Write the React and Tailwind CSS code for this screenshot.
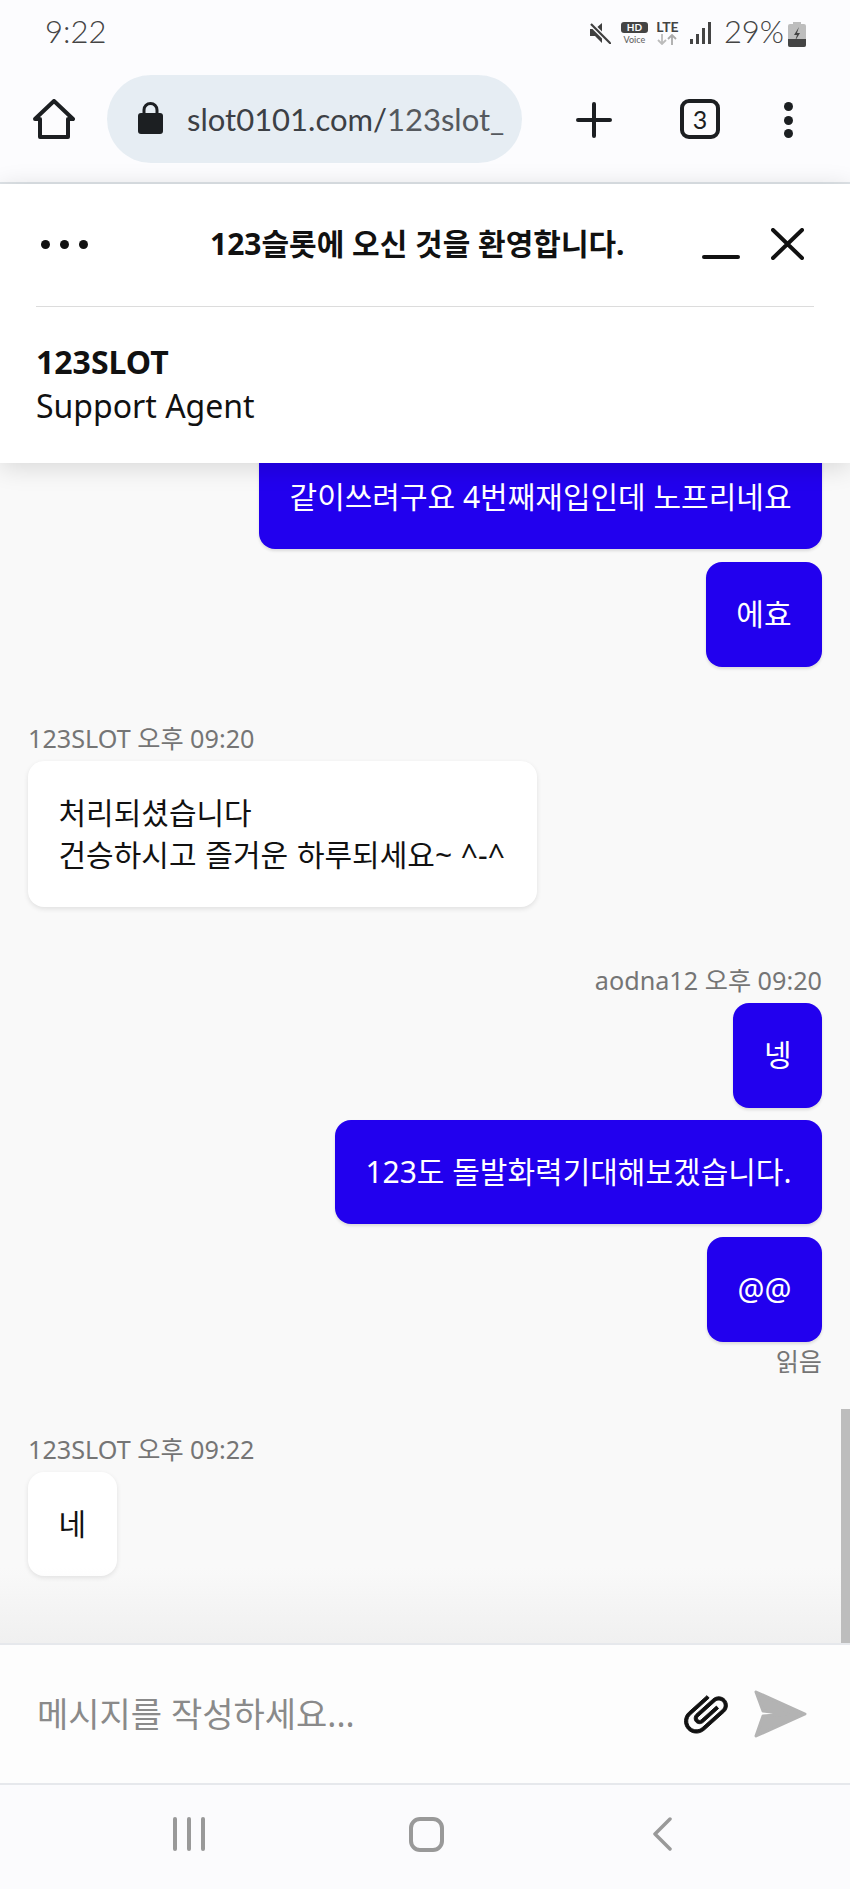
const cjk = "font-['Noto_Sans','Noto_Sans_CJK_KR',sans-serif]";

function Me({ children, className = "" }) {
  return (
    <div className={"self-end rounded-[16px] bg-[#2200ee] px-[30.5px] py-[31.25px] text-[30px] leading-[42px] text-white shadow-[0_2px_3px_rgba(0,0,0,0.12)] " + className}>
      {children}
    </div>
  );
}
function Them({ children, className = "" }) {
  return (
    <div className={"self-start rounded-[16px] bg-white px-[30.5px] py-[31.25px] text-[30px] leading-[42px] text-[#111] shadow-[0_2px_5px_rgba(0,0,0,0.1)] " + className}>
      {children}
    </div>
  );
}
function Meta({ children, className = "" }) {
  return <div className={"h-[36px] text-[25.2px] leading-[36px] text-[#757575] " + className}>{children}</div>;
}

export default function App() {
  return (
    <div className={"flex h-[1889px] w-[850px] flex-col overflow-hidden bg-[#fcfcfe] " + cjk}>
      {/* status bar */}
      <div className="flex h-[66px] shrink-0 items-start justify-between pl-[45px] pr-[44px] pt-[12px] font-['Lato','Noto_Sans',sans-serif] text-[#444]">
        <div className="text-[31px] font-light leading-[38px]">9:22</div>
        <div className="flex items-start">
          <svg width="22" height="22" viewBox="0 0 22 22" className="mt-[10px]">
            <path d="M1 7h5l7-6v20l-7-7H1z" fill="#3f3f3f" />
            <path d="M1 1l21 21" stroke="#fcfcfe" strokeWidth="5" />
            <path d="M2 2l20 20" stroke="#3f3f3f" strokeWidth="2.2" />
          </svg>
          <div className="ml-[10px] mt-[10px] flex w-[27px] flex-col items-center">
            <div className="flex h-[11px] w-[27px] items-center justify-center rounded-[3px] bg-[#444] text-[10px] font-bold leading-[11px] text-[#fcfcfe]">HD</div>
            <div className="mt-[1px] text-[9px] font-medium leading-[11px] text-[#666]">Voice</div>
          </div>
          <div className="ml-[7px] mt-[8px] flex w-[25px] flex-col items-center">
            <div className="text-[14px] font-bold leading-[14px] text-[#444]">LTE</div>
            <svg width="20" height="11" viewBox="0 0 20 11">
              <path d="M5 0v10M1 6l4 4 4-4" stroke="#bbb" strokeWidth="1.8" fill="none" />
              <path d="M15 11V1M11 5l4-4 4 4" stroke="#aaa" strokeWidth="1.8" fill="none" />
            </svg>
          </div>
          <svg width="22" height="22" viewBox="0 0 22 22" className="ml-[10px] mt-[10px]" fill="#444">
            <rect x="0" y="17" width="3" height="5" />
            <rect x="6" y="12" width="3" height="10" />
            <rect x="12" y="6" width="3" height="16" />
            <rect x="18" y="0" width="3" height="22" />
          </svg>
          <div className="ml-[12px] text-[31px] font-light leading-[38px]">29%</div>
          <svg width="18" height="25" viewBox="0 0 18 25" className="ml-[4px] mt-[10px]">
            <rect x="5" y="0" width="8" height="3" fill="#bdbdbd" />
            <rect x="0" y="2" width="18" height="23" rx="2" fill="#bdbdbd" />
            <path d="M0 17h18v6a2 2 0 0 1-2 2H2a2 2 0 0 1-2-2z" fill="#444" />
            <path d="M11 5l-5 8h3l-2 6 5-8H9z" fill="#444" />
          </svg>
        </div>
      </div>

      {/* toolbar */}
      <div className="flex h-[118px] shrink-0 items-start border-b-[2px] border-[#dfe4e8] pt-[9px]">
        <svg width="42" height="42" viewBox="0 0 42 42" className="ml-[33px] mt-[24px]" fill="none" stroke="#1c1f22" strokeWidth="4" strokeLinejoin="round" strokeLinecap="round">
          <path d="M2 20L21 2l19 18h-5v18H7V20z" />
        </svg>
        <div className="ml-[32px] flex h-[88px] w-[415px] items-center rounded-full bg-[#e6edf3] pl-[31px] font-['Lato','Noto_Sans',sans-serif]">
          <svg width="25" height="32" viewBox="0 0 25 32" className="mt-[-2px]">
            <path d="M6 13V8a6.5 6.5 0 0 1 13 0v5" fill="none" stroke="#1c1f22" strokeWidth="3" />
            <rect x="0" y="11" width="25" height="21" rx="3" fill="#1c1f22" />
          </svg>
          <div className="ml-[24px] text-[31px] leading-[40px] text-[#3c4045]">
            slot0101.com/<span className="text-[#55595e]">123slot_</span>
          </div>
        </div>
        <svg width="36" height="36" viewBox="0 0 36 36" className="ml-[54px] mt-[27px]" stroke="#1c1f22" strokeWidth="4" strokeLinecap="round">
          <path d="M18 2v32M2 18h32" />
        </svg>
        <div className="ml-[68px] mt-[24px] flex h-[40px] w-[40px] items-center justify-center rounded-[9px] border-[4px] border-[#1c1f22] font-['Lato',sans-serif] text-[25px] font-normal leading-none text-[#1c1f22]">3</div>
        <div className="ml-[64px] mt-[27px] flex flex-col gap-[4.5px]">
          <div className="h-[9px] w-[9px] rounded-full bg-[#1c1f22]" />
          <div className="h-[9px] w-[9px] rounded-full bg-[#1c1f22]" />
          <div className="h-[9px] w-[9px] rounded-full bg-[#1c1f22]" />
        </div>
      </div>

      {/* chat header */}
      <div className="relative z-10 h-[279px] shrink-0 bg-white shadow-[0_4px_24px_rgba(0,0,0,0.14)]">
        <div className="flex h-[122px] items-center pb-[2px]">
          <div className="ml-[41px] flex gap-[10px]">
            <div className="h-[9px] w-[9px] rounded-full bg-[#111]" />
            <div className="h-[9px] w-[9px] rounded-full bg-[#111]" />
            <div className="h-[9px] w-[9px] rounded-full bg-[#111]" />
          </div>
          <div className="ml-[122px] text-[30px] font-bold leading-[40px] text-[#111]">123슬롯에 오신 것을 환영합니다.</div>
          <div className="ml-[77px] mt-[26px] h-[4px] w-[38px] rounded-full bg-[#111]" />
          <svg width="33" height="32" viewBox="0 0 33 32" className="ml-[31px]" stroke="#111" strokeWidth="4" strokeLinecap="round">
            <path d="M2 2l29 28M31 2L2 30" />
          </svg>
        </div>
        <div className="mx-[36px] h-[1px] bg-[#dcdcdc]" />
        <div className="px-[36px] pt-[33px]">
          <div className="text-[32px] font-bold leading-[44px] text-[#111]">123SLOT</div>
          <div className="text-[32px] leading-[44px] text-[#111]">Support Agent</div>
        </div>
      </div>

      {/* messages */}
      <div className="relative flex min-h-0 flex-1 flex-col justify-end overflow-hidden bg-[#f9f9f9] pb-[67px] pl-[28px] pr-[28px]">
        <Me>같이쓰려구요 4번째재입인데 노프리네요</Me>
        <Me className="mt-[13px]">에효</Me>

        <Meta className="mt-[53px]">123SLOT 오후 09:20</Meta>
        <div className="mt-[5px] flex flex-col">
          <Them className="pr-[32px] [word-spacing:1px]">
            처리되셨습니다
            <br />
            건승하시고 즐거운 하루되세요~ ^-^
          </Them>
        </div>

        <Meta className="mt-[55px] self-end">aodna12 오후 09:20</Meta>
        <Me className="mt-[5px]">넹</Me>
        <Me className="mt-[12px]">123도 돌발화력기대해보겠습니다.</Me>
        <Me className="mt-[13px]">@@</Me>
        <Meta className="mt-[1px] self-end">읽음</Meta>

        <Meta className="mt-[52px]">123SLOT 오후 09:22</Meta>
        <div className="mt-[5px] flex flex-col">
          <Them>네</Them>
        </div>

        <div className="absolute inset-x-0 bottom-0 h-[75px] bg-gradient-to-b from-transparent to-[#f0f0f0]" />
        <div className="absolute bottom-0 right-0 h-[234px] w-[9px] bg-[#bdbdbd]" />
      </div>

      {/* input */}
      <div className="flex h-[142px] shrink-0 items-center border-y-[2px] border-y-[#e6e8ec] bg-[#fdfdfd] pl-[37px]">
        <div className="text-[34px] leading-[44px] text-[#8a8a8a]">메시지를 작성하세요...</div>
        <svg width="52" height="52" viewBox="0 0 24 24" className="ml-auto">
          <g transform="rotate(48 12 12) translate(24 0) scale(-1 1)">
            <path
              d="M16.5 6v11.5c0 2.21-1.79 4-4 4s-4-1.79-4-4V5c0-1.38 1.12-2.5 2.5-2.5s2.5 1.12 2.5 2.5v10.5c0 .55-.45 1-1 1s-1-.45-1-1V6H10v9.5c0 1.38 1.12 2.5 2.5 2.5s2.5-1.12 2.5-2.5V5c0-2.21-1.79-4-4-4S7 2.79 7 5v12.5c0 3.04 2.46 5.5 5.5 5.5s5.5-2.46 5.5-5.5V6h-1.5z"
              fill="#111"
              stroke="#111"
              strokeWidth="0.4"
            />
          </g>
        </svg>
        <svg width="53" height="48" viewBox="0 0 53 48" className="ml-[22px] mr-[43px]">
          <path d="M2 2l49 22L2 46l7-20 25-2-25-3z" fill="#b3b3b3" stroke="#b3b3b3" strokeWidth="3" strokeLinejoin="round" />
        </svg>
      </div>

      {/* nav bar */}
      <div className="flex h-[104px] shrink-0 items-start bg-[#fbfbfd] pt-[32px]">
        <div className="ml-[173px] flex h-[34px] gap-[10px]">
          <div className="h-full w-[4px] rounded-full bg-[#999]" />
          <div className="h-full w-[4px] rounded-full bg-[#999]" />
          <div className="h-full w-[4px] rounded-full bg-[#999]" />
        </div>
        <div className="ml-[204px] h-[35px] w-[35px] rounded-[11px] border-[4px] border-[#999]" />
        <svg width="20" height="34" viewBox="0 0 20 34" className="ml-[208px]" fill="none" stroke="#999" strokeWidth="3.5" strokeLinecap="round" strokeLinejoin="round">
          <path d="M18 2L3 17l15 15" />
        </svg>
      </div>
    </div>
  );
}
